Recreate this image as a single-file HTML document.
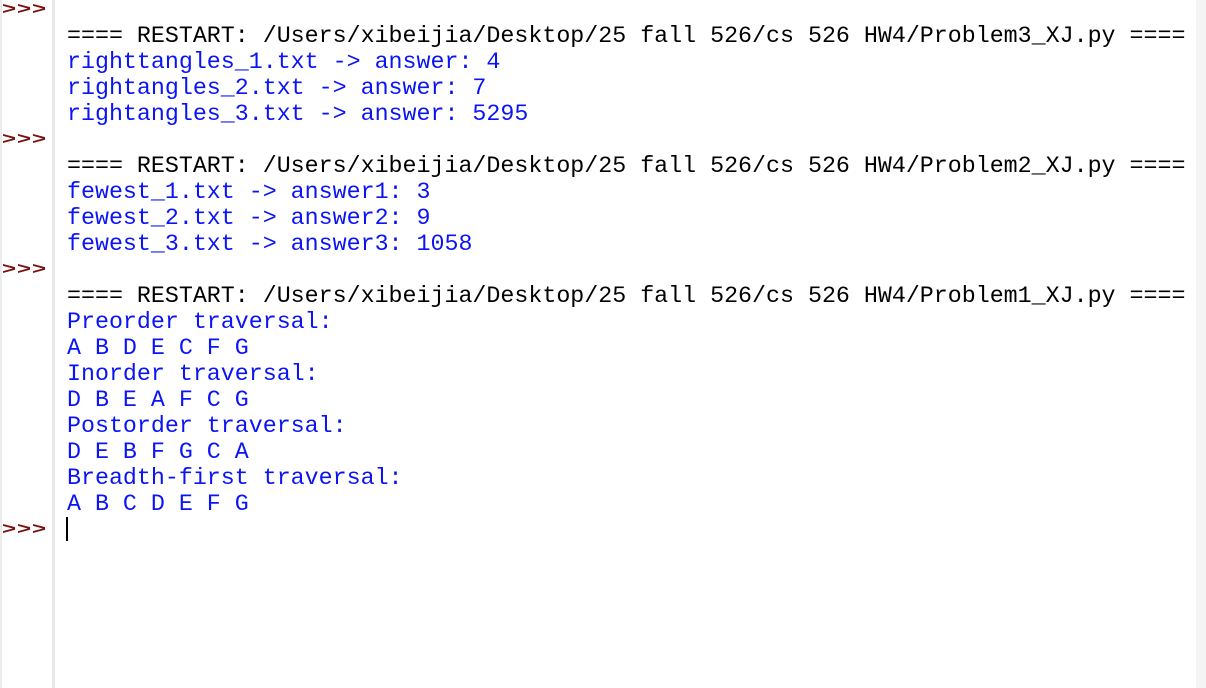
<!DOCTYPE html>
<html><head><meta charset="utf-8"><style>
html,body{margin:0;padding:0;width:1206px;height:688px;overflow:hidden;background:#fff;}
#lstrip{position:absolute;left:0;top:0;width:2px;height:688px;background:#ececec;}
#gut{position:absolute;left:52px;top:0;width:3px;height:688px;background:#e8e8e8;}
#rstrip{position:absolute;left:1196px;top:0;width:10px;height:688px;background:#f4f4f4;}
.p{position:absolute;left:2px;font-family:"Liberation Sans",sans-serif;font-weight:bold;font-size:24px;color:#7a1010;line-height:16px;letter-spacing:1px;transform:scaleY(0.7);transform-origin:0 50%;}
#txt{position:absolute;left:67px;top:-3px;font-family:"Liberation Mono",monospace;font-size:23.3px;line-height:26px;white-space:pre;}
.b{color:#0a14f5;}.k{color:#000;}
#cur{position:absolute;left:66px;top:517px;width:2px;height:24px;background:#000;}
</style></head><body>
<div id="lstrip"></div><div id="gut"></div><div id="rstrip"></div>
<div class="p" style="top:1px">&gt;&gt;&gt;</div>
<div class="p" style="top:131px">&gt;&gt;&gt;</div>
<div class="p" style="top:261px">&gt;&gt;&gt;</div>
<div class="p" style="top:521px">&gt;&gt;&gt;</div>
<div id="txt"><span class="k">
==== RESTART: /Users/xibeijia/Desktop/25 fall 526/cs 526 HW4/Problem3_XJ.py ====</span>
<span class="b">righttangles_1.txt -&gt; answer: 4
rightangles_2.txt -&gt; answer: 7
rightangles_3.txt -&gt; answer: 5295</span>

<span class="k">==== RESTART: /Users/xibeijia/Desktop/25 fall 526/cs 526 HW4/Problem2_XJ.py ====</span>
<span class="b">fewest_1.txt -&gt; answer1: 3
fewest_2.txt -&gt; answer2: 9
fewest_3.txt -&gt; answer3: 1058</span>

<span class="k">==== RESTART: /Users/xibeijia/Desktop/25 fall 526/cs 526 HW4/Problem1_XJ.py ====</span>
<span class="b">Preorder traversal:
A B D E C F G
Inorder traversal:
D B E A F C G
Postorder traversal:
D E B F G C A
Breadth-first traversal:
A B C D E F G</span></div>
<div id="cur"></div>
</body></html>
